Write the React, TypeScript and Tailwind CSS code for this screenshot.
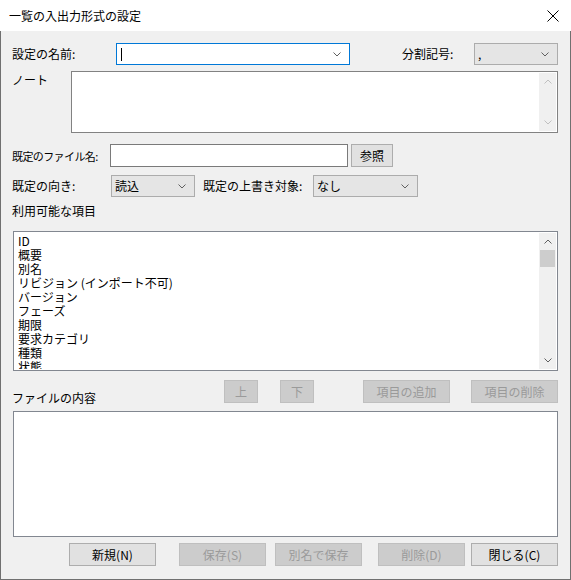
import React from "react";

const availableItems = [
  "ID",
  "概要",
  "別名",
  "リビジョン (インポート不可)",
  "バージョン",
  "フェーズ",
  "期限",
  "要求カテゴリ",
  "種類",
  "状態",
];

function Chevron({ up = false, color = "#606060" }: { up?: boolean; color?: string }) {
  return (
    <svg width="8" height="5" viewBox="0 0 8 5" className="block">
      <polyline
        points={up ? "0.5,4.5 4,1 7.5,4.5" : "0.5,0.5 4,4 7.5,0.5"}
        fill="none"
        stroke={color}
        strokeWidth="1"
      />
    </svg>
  );
}

function ComboBox({
  value = "",
  className = "",
}: {
  value?: string;
  className?: string;
}) {
  return (
    <div
      className={`h-[22px] flex items-center justify-between bg-[#e5e5e5] border border-[#acacac] pl-[3px] pr-[8px] ${className}`}
    >
      <span className="leading-[14px]">{value}</span>
      <Chevron />
    </div>
  );
}

function Button({
  label,
  disabled = false,
  className = "",
}: {
  label: string;
  disabled?: boolean;
  className?: string;
}) {
  return (
    <div
      className={`h-[23px] w-[87px] flex items-center justify-center border leading-[14px] whitespace-nowrap ${
        disabled
          ? "bg-[#cccccc] border-[#bfbfbf] text-[#9a9a9a]"
          : "bg-[#e1e1e1] border-[#adadad] text-black"
      } ${className}`}
    >
      {label}
    </div>
  );
}

function ScrollBar({ disabled = false, thumb = false }: { disabled?: boolean; thumb?: boolean }) {
  const color = disabled ? "#c0c0c0" : "#606060";
  return (
    <div className="w-[17px] bg-[#f0f0f0] flex flex-col">
      <div className="h-[17px] flex items-center justify-center">
        <Chevron up color={color} />
      </div>
      {thumb && <div className="mx-[1px] h-[17px] bg-[#cdcdcd]" />}
      <div className="flex-1" />
      <div className="h-[17px] flex items-center justify-center">
        <Chevron color={color} />
      </div>
    </div>
  );
}

export default function App() {
  return (
    <div className="w-[571px] h-[580px] flex flex-col text-[12px] text-black font-['Noto_Sans_CJK_JP','Noto_Sans',sans-serif] leading-[16px]">
      <div className="h-[31px] shrink-0 bg-white flex items-center justify-between pl-[9px] pr-[12px]">
        <span className="text-[12px]">一覧の入出力形式の設定</span>
        <svg width="12" height="12" viewBox="0 0 12 12" className="block">
          <line x1="0.5" y1="0.5" x2="11.5" y2="11.5" stroke="#000" strokeWidth="1" />
          <line x1="11.5" y1="0.5" x2="0.5" y2="11.5" stroke="#000" strokeWidth="1" />
        </svg>
      </div>

      <div className="flex-1 bg-[#f0f0f0] border-x border-b border-[#707070] pl-[11px] pr-[12px] flex flex-col">
        {/* name + separator */}
        <div className="mt-[12px] h-[22px] flex items-center">
          <span className="w-[104px] whitespace-nowrap">設定の名前:</span>
          <div className="w-[234px] h-[22px] bg-white border border-[#0078d7] flex items-center justify-between pl-[4px] pr-[8px]">
            <div className="w-[1px] h-[13px] bg-black" />
            <Chevron />
          </div>
          <span className="ml-auto w-[72px] whitespace-nowrap">分割記号:</span>
          <ComboBox value="," className="w-[84px]" />
        </div>

        {/* note */}
        <div className="mt-[6px] flex">
          <span className="w-[59px] pt-[1px]">ノート</span>
          <div className="w-[487px] h-[62px] bg-white border border-[#828282] p-[1px] flex">
            <div className="flex-1" />
            <ScrollBar disabled />
          </div>
        </div>

        {/* default file name */}
        <div className="mt-[11px] h-[23px] flex items-center">
          <span className="w-[98px] whitespace-nowrap text-[11px] tracking-[-0.6px]">既定のファイル名:</span>
          <div className="w-[238px] h-[23px] bg-white border border-[#7a7a7a]" />
          <Button label="参照" className="ml-[3px] !w-[42px]" />
        </div>

        {/* direction + overwrite target */}
        <div className="mt-[8px] h-[22px] flex items-center">
          <span className="w-[99px] whitespace-nowrap">既定の向き:</span>
          <ComboBox value="読込" className="w-[84px]" />
          <span className="ml-[8px] w-[110px] whitespace-nowrap">既定の上書き対象:</span>
          <ComboBox value="なし" className="w-[105px]" />
        </div>

        <div className="mt-[6px] h-[16px]">利用可能な項目</div>

        {/* available items list */}
        <div className="mt-[12px] ml-[1px] w-[545px] h-[140px] bg-white border border-[#828790] p-[1px] flex">
          <div className="flex-1 overflow-hidden pl-[3px] pt-[1px]">
            {availableItems.map((item) => (
              <div key={item} className="leading-[14px] h-[14px] whitespace-nowrap">
                {item}
              </div>
            ))}
          </div>
          <ScrollBar thumb />
        </div>

        {/* move / add / remove */}
        <div className="mt-[9px] h-[23px] flex items-start">
          <span className="w-[212px] mt-[10px]">ファイルの内容</span>
          <Button label="上" disabled className="!w-[34px]" />
          <Button label="下" disabled className="!w-[34px] ml-[22px]" />
          <Button label="項目の追加" disabled className="ml-[49px]" />
          <Button label="項目の削除" disabled className="ml-[21px]" />
        </div>

        {/* file content */}
        <div className="mt-[8px] ml-[1px] w-[545px] h-[126px] bg-white border border-[#828790]" />

        {/* footer buttons */}
        <div className="mt-[6px] h-[23px] flex">
          <Button label="新規(N)" className="ml-[57px]" />
          <Button label="保存(S)" disabled className="ml-[23px]" />
          <Button label="別名で保存" disabled className="ml-[9px]" />
          <Button label="削除(D)" disabled className="ml-[16px]" />
          <Button label="閉じる(C)" className="ml-[6px]" />
        </div>
      </div>
    </div>
  );
}
